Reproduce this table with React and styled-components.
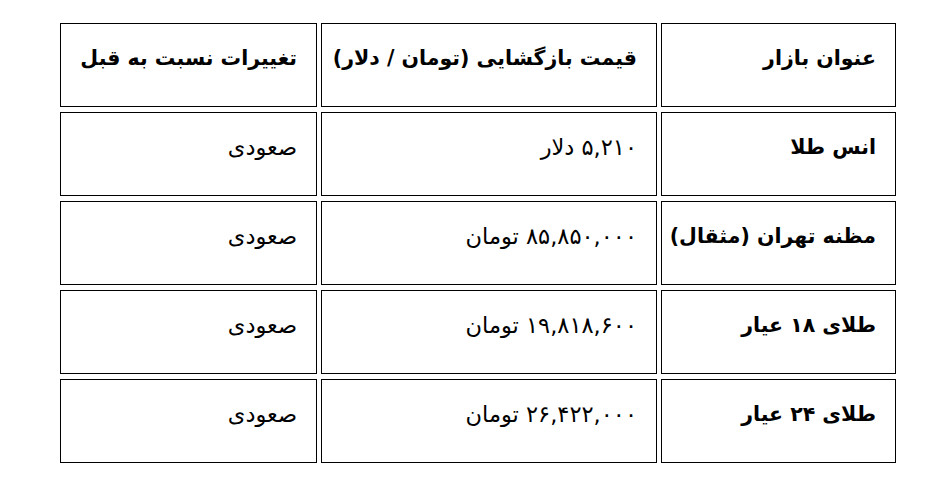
import styled, { createGlobalStyle } from "styled-components";

const Global = createGlobalStyle`
  html, body {
    margin: 0;
    padding: 0;
    background: #ffffff;
  }
  body {
    font-family: "DejaVu Sans", "Noto Sans", sans-serif;
    color: #000;
  }
`;

const Page = styled.div`
  padding: 18px 0 0 56px;
`;

const Table = styled.table`
  direction: rtl;
  width: 844px;
  table-layout: fixed;
  border-collapse: separate;
  border-spacing: 4px 5px;
`;

const Cell = styled.td`
  box-sizing: border-box;
  width: ${(props) => props.w}px;
  height: 84px;
  border: 1.5px solid #000;
  padding: 18px 19px 0;
  vertical-align: top;
  text-align: right;
  font-size: ${(props) => (props.bold ? "20.5px" : "22.5px")};
  font-weight: ${(props) => (props.bold ? 700 : 400)};
  line-height: 32px;
  white-space: nowrap;
`;

const widths = [235, 336, 257];

const head = ["عنوان بازار", "قیمت بازگشایی (تومان / دلار)", "تغییرات نسبت به قبل"];

const rows = [
  ["انس طلا", "۵,۲۱۰ دلار", "صعودی"],
  ["مظنه تهران (مثقال)", "۸۵,۸۵۰,۰۰۰ تومان", "صعودی"],
  ["طلای ۱۸ عیار", "۱۹,۸۱۸,۶۰۰ تومان", "صعودی"],
  ["طلای ۲۴ عیار", "۲۶,۴۲۲,۰۰۰ تومان", "صعودی"],
];

const App = () => {
  return (
    <>
      <Global />
      <Page>
        <Table>
          <tbody>
            <tr>
              {head.map((h, i) => (
                <Cell key={i} w={widths[i]} bold>
                  {h}
                </Cell>
              ))}
            </tr>
            {rows.map((r, ri) => (
              <tr key={ri}>
                {r.map((c, i) => (
                  <Cell key={i} w={widths[i]} bold={i === 0}>
                    {c}
                  </Cell>
                ))}
              </tr>
            ))}
          </tbody>
        </Table>
      </Page>
    </>
  );
};

export default App;
